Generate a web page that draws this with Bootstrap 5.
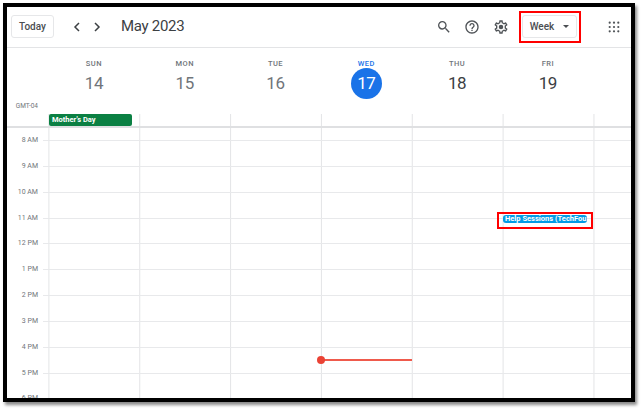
<!DOCTYPE html>
<html lang="en">
<head>
<meta charset="UTF-8">
<meta name="viewport" content="width=device-width, initial-scale=1">
<title>Calendar week view</title>
<link href="https://cdn.jsdelivr.net/npm/bootstrap@5.3.0/dist/css/bootstrap.min.css" rel="stylesheet">
<style>
    html, body { height: 100%; background: #fff; overflow: hidden; font-family: Roboto, "Liberation Sans", sans-serif; color: #3c4043; }
    .cal-frame { position: relative; width: 632px; height: 399px; margin: 3px 0 0 3px; border: 4px solid #000; box-shadow: 2px 3px 3px #8a8a8a; overflow: hidden; background: #fff; }

    .cal-top { height: 41px; padding-left: 4px; padding-bottom: 1px; border-bottom: 1px solid #e3e4e6; }
    .cal-btn { height: 23px; padding: 0; font-size: 10px; font-weight: 500; color: #4a4e52; background: #fff; border: 1px solid #e6e7e9; border-radius: 3px; }
    .today-btn { width: 43px; }
    .week-btn { width: 55px; margin-left: 13px; }
    .caret-down { display: inline-block; margin-left: 9px; border: 3px solid transparent; border-top: 3px solid #4a4e52; border-bottom: 0; vertical-align: 2px; }
    .nav-chevrons { margin-left: 18px; gap: 10px; }
    .cal-title { font-size: 15px; letter-spacing: -.3px; margin: 0 0 0 19px; line-height: 1; color: #3c4043; }
    .tool-icon { fill: #4f5357; display: block; }
    .search-icon { margin-right: 12px; }
    .help-icon { margin-right: 13px; }
    .apps-icon { margin: 0 11px 0 31px; }

    .day-heads { height: 66px; }
    .gutter { width: 41px; flex: none; }
    .gmt-label { font-size: 6.5px; color: #70757a; align-self: flex-end; text-align: right; width: 31px; margin-right: 10.5px; flex: none; padding-bottom: 2px; }
    .day-head { width: 90.8px; flex: none; text-align: center; color: #70757a; }
    .day-name { font-size: 7.5px; font-weight: 500; letter-spacing: .5px; line-height: 1; margin-top: 12px; }
    .day-num { font-size: 17px; letter-spacing: -.4px; line-height: 31px; width: 31px; height: 31px; margin: 0 auto; border-radius: 50%; }
    .day-head.is-past .day-num { color: #70757a; }
    .day-head.is-next .day-num { color: #3c4043; }
    .day-head.is-today .day-name { color: #1a73e8; }
    .day-head.is-today .day-num { background: #1a73e8; color: #fff; }

    .allday-row { height: 14px; border-bottom: 2px solid #dfe0e2; }
    .col-lines { flex: 1; background-image: linear-gradient(to right, #e3e4e6 1px, transparent 1px); background-size: 90.85px 100%; background-position: .4px 0; }
    .allday-event { width: 83px; height: 12px; margin-left: 1px; background: #0b8043; color: #fff; border-radius: 2px; font-size: 7.5px; font-weight: 700; line-height: 12px; padding-left: 3px; white-space: nowrap; }

    .hour-row { height: 25.85px; }
    .hour-label { width: 36px; flex: none; padding-right: 5px; font-size: 7px; line-height: 1; color: #70757a; text-align: right; transform: translateY(-3px); }
    .hour-tick { width: 5px; flex: none; border-top: 1px solid #e8e9eb; }
    .hour-cells { flex: 1; border-top: 1px solid #e8e9eb; }
    .hour-first { height: 12px; }

    .time-event { position: absolute; left: 496px; top: 208px; width: 84px; height: 8px; background: #039be5; color: #fff; border-radius: 3px; font-size: 7.5px; font-weight: 700; line-height: 8px; padding-left: 2px; white-space: nowrap; }
    .now-line { position: absolute; left: 314px; top: 352px; width: 91px; height: 2px; background: #ef5a4c; }
    .now-dot { position: absolute; left: -4px; top: -3px; width: 8px; height: 8px; border-radius: 50%; background: #ea4335; }
    .callout { position: absolute; border: 2.5px solid #f00; pointer-events: none; }
    .callout-week { left: 512px; top: 4px; width: 62px; height: 32px; }
    .callout-event { left: 490px; top: 205px; width: 96px; height: 17px; }
</style>
</head>
<body>
<div class="cal-frame">
    <header class="cal-top d-flex align-items-center">
        <button class="btn cal-btn today-btn" type="button">Today</button>
        <div class="nav-chevrons d-flex">
            <svg width="10" height="12" viewBox="0 0 10 12" fill="none" stroke="#3c4043" stroke-width="1.5"><path d="M7 2 3 6l4 4"/></svg>
            <svg width="10" height="12" viewBox="0 0 10 12" fill="none" stroke="#3c4043" stroke-width="1.5"><path d="m3 2 4 4-4 4"/></svg>
        </div>
        <h1 class="cal-title fw-normal">May 2023</h1>
        <div class="ms-auto d-flex align-items-center">
            <svg class="tool-icon search-icon" width="16" height="16" viewBox="0 0 24 24"><path d="M15.5 14h-.79l-.28-.27A6.471 6.471 0 0 0 16 9.5 6.5 6.5 0 1 0 9.5 16c1.61 0 3.09-.59 4.23-1.57l.27.28v.79l5 4.99L20.49 19l-4.99-5zm-6 0C7.01 14 5 11.99 5 9.5S7.01 5 9.5 5 14 7.01 14 9.5 11.99 14 9.5 14z"/></svg>
            <svg class="tool-icon help-icon" width="16" height="16" viewBox="0 0 24 24"><path d="M11 18h2v-2h-2v2zm1-16C6.48 2 2 6.48 2 12s4.48 10 10 10 10-4.48 10-10S17.52 2 12 2zm0 18c-4.41 0-8-3.59-8-8s3.59-8 8-8 8 3.59 8 8-3.59 8-8 8zm0-14c-2.21 0-4 1.79-4 4h2c0-1.1.9-2 2-2s2 .9 2 2c0 2-3 1.75-3 5h2c0-2.25 3-2.5 3-5 0-2.21-1.79-4-4-4z"/></svg>
            <svg class="tool-icon" width="16" height="16" viewBox="0 0 24 24"><path d="M19.43 12.98c.04-.32.07-.64.07-.98 0-.34-.03-.66-.07-.98l2.11-1.65c.19-.15.24-.42.12-.64l-2-3.46c-.09-.16-.26-.25-.44-.25-.06 0-.12.01-.17.03l-2.49 1c-.52-.4-1.08-.73-1.69-.98l-.38-2.65C14.46 2.18 14.25 2 14 2h-4c-.25 0-.46.18-.49.42l-.38 2.65c-.61.25-1.17.59-1.69.98l-2.49-1c-.06-.02-.12-.03-.18-.03-.17 0-.34.09-.43.25l-2 3.46c-.13.22-.07.49.12.64l2.11 1.65c-.04.32-.07.65-.07.98 0 .33.03.66.07.98l-2.11 1.65c-.19.15-.24.42-.12.64l2 3.46c.09.16.26.25.44.25.06 0 .12-.01.17-.03l2.49-1c.52.4 1.08.73 1.69.98l.38 2.65c.03.24.24.42.49.42h4c.25 0 .46-.18.49-.42l.38-2.65c.61-.25 1.17-.59 1.69-.98l2.49 1c.06.02.12.03.18.03.17 0 .34-.09.43-.25l2-3.46c.12-.22.07-.49-.12-.64l-2.11-1.65zm-1.98-1.71c.04.31.05.52.05.73 0 .21-.02.43-.05.73l-.14 1.13.89.7 1.08.84-.7 1.21-1.27-.51-1.04-.42-.9.68c-.43.32-.84.56-1.25.73l-1.06.43-.16 1.13-.2 1.35h-1.4l-.19-1.35-.16-1.13-1.06-.43c-.43-.18-.83-.41-1.23-.71l-.91-.7-1.06.43-1.27.51-.7-1.21 1.08-.84.89-.7-.14-1.13c-.03-.31-.05-.54-.05-.74s.02-.43.05-.73l.14-1.13-.89-.7-1.08-.84.7-1.21 1.27.51 1.04.42.9-.68c.43-.32.84-.56 1.25-.73l1.06-.43.16-1.13.2-1.35h1.39l.19 1.35.16 1.13 1.06.43c.43.18.83.41 1.23.71l.91.7 1.06-.43 1.27-.51.7 1.21-1.07.85-.89.7.14 1.13z"/><circle cx="12" cy="12" r="3.4"/></svg>
            <button class="btn cal-btn week-btn" type="button">Week<span class="caret-down"></span></button>
            <svg class="tool-icon apps-icon" width="12" height="12" viewBox="0 0 12 12"><circle cx="1.7" cy="1.7" r="1.1"/><circle cx="6" cy="1.7" r="1.1"/><circle cx="10.3" cy="1.7" r="1.1"/><circle cx="1.7" cy="6" r="1.1"/><circle cx="6" cy="6" r="1.1"/><circle cx="10.3" cy="6" r="1.1"/><circle cx="1.7" cy="10.3" r="1.1"/><circle cx="6" cy="10.3" r="1.1"/><circle cx="10.3" cy="10.3" r="1.1"/></svg>
        </div>
    </header>

    <div class="day-heads d-flex">
        <div class="gmt-label">GMT-04</div>
        <div class="day-head is-past"><div class="day-name">SUN</div><div class="day-num">14</div></div>
        <div class="day-head is-past"><div class="day-name">MON</div><div class="day-num">15</div></div>
        <div class="day-head is-past"><div class="day-name">TUE</div><div class="day-num">16</div></div>
        <div class="day-head is-today"><div class="day-name">WED</div><div class="day-num">17</div></div>
        <div class="day-head is-next"><div class="day-name">THU</div><div class="day-num">18</div></div>
        <div class="day-head is-next"><div class="day-name">FRI</div><div class="day-num">19</div></div>
    </div>

    <div class="allday-row d-flex">
        <div class="gutter"></div>
        <div class="col-lines"><div class="allday-event">Mother's Day</div></div>
    </div>

    <div class="d-flex hour-first"><div class="gutter"></div><div class="col-lines"></div></div>
    <div class="hour-row d-flex"><div class="hour-label">8 AM</div><div class="hour-tick"></div><div class="hour-cells col-lines"></div></div>
    <div class="hour-row d-flex"><div class="hour-label">9 AM</div><div class="hour-tick"></div><div class="hour-cells col-lines"></div></div>
    <div class="hour-row d-flex"><div class="hour-label">10 AM</div><div class="hour-tick"></div><div class="hour-cells col-lines"></div></div>
    <div class="hour-row d-flex"><div class="hour-label">11 AM</div><div class="hour-tick"></div><div class="hour-cells col-lines"></div></div>
    <div class="hour-row d-flex"><div class="hour-label">12 PM</div><div class="hour-tick"></div><div class="hour-cells col-lines"></div></div>
    <div class="hour-row d-flex"><div class="hour-label">1 PM</div><div class="hour-tick"></div><div class="hour-cells col-lines"></div></div>
    <div class="hour-row d-flex"><div class="hour-label">2 PM</div><div class="hour-tick"></div><div class="hour-cells col-lines"></div></div>
    <div class="hour-row d-flex"><div class="hour-label">3 PM</div><div class="hour-tick"></div><div class="hour-cells col-lines"></div></div>
    <div class="hour-row d-flex"><div class="hour-label">4 PM</div><div class="hour-tick"></div><div class="hour-cells col-lines"></div></div>
    <div class="hour-row d-flex"><div class="hour-label">5 PM</div><div class="hour-tick"></div><div class="hour-cells col-lines"></div></div>
    <div class="hour-row d-flex"><div class="hour-label">6 PM</div><div class="hour-tick"></div><div class="hour-cells col-lines"></div></div>

    <div class="time-event">Help Sessions (TechFou</div>
    <div class="now-line"><div class="now-dot"></div></div>
    <div class="callout callout-week"></div>
    <div class="callout callout-event"></div>
</div>
<script src="https://cdn.jsdelivr.net/npm/bootstrap@5.3.0/dist/js/bootstrap.bundle.min.js"></script>
</body>
</html>
